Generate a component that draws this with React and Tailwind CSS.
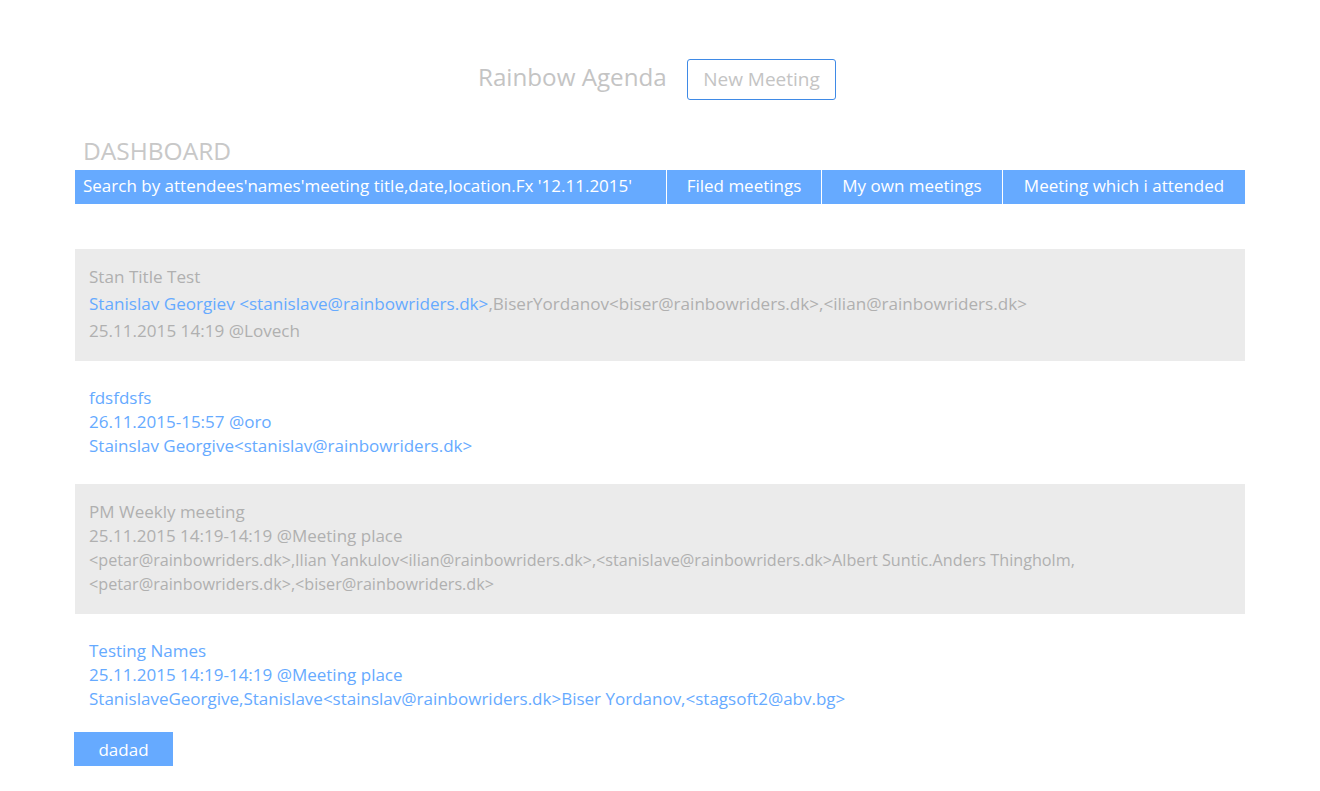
export default function App() {
  const font = { fontFamily: '"Open Sans", "Noto Sans", sans-serif' };
  return (
    <div className="min-h-[791px] bg-white" style={font}>
      <div className="flex items-center justify-center gap-[22px] pr-[6px] pt-[59px]">
        <span className="mb-[5px] w-[187px] whitespace-nowrap text-[24.2px] text-[#c4c4c4]">Rainbow Agenda</span>
        <button className="h-[41px] w-[149px] rounded-[3px] border border-[#3f8ae6] text-[19px] text-[#c4c4c4]">New Meeting</button>
      </div>
      <div className="mx-[75px] mt-[36px]">
        <div className="pl-[8px] text-[24.5px] leading-[30px] text-[#c8c8c8]">DASHBOARD</div>
        <div className="mt-[4px] flex h-[34px] bg-[#66aaff] pb-[3px] text-[17px] text-white">
          <div className="flex w-[591px] items-center pl-[8px]">Search by attendees'names'meeting title,date,location.Fx '12.11.2015'</div>
          <div className="-mb-[3px] flex w-[155px] items-center justify-center border-l border-white pb-[3px]">Filed meetings</div>
          <div className="-mb-[3px] flex w-[181px] items-center justify-center border-l border-white pb-[3px]">My own meetings</div>
          <div className="-mb-[3px] flex flex-1 items-center justify-center border-l border-white pb-[3px]">Meeting which i attended</div>
        </div>
        <div className="mt-[45px] bg-[#ebebeb] px-[14px] pb-[17px] pt-[14px] text-[17.1px] leading-[27px] text-[#b0b0b0]">
          <div>Stan Title Test</div>
          <div><span className="text-[#66aaff]">Stanislav Georgiev &lt;stanislave@rainbowriders.dk&gt;</span>,BiserYordanov&lt;biser@rainbowriders.dk&gt;,&lt;ilian@rainbowriders.dk&gt;</div>
          <div>25.11.2015 14:19 @Lovech</div>
        </div>
        <div className="mt-[15px] px-[14px] pb-[15px] pt-[10px] text-[17px] leading-[24px] text-[#66aaff]">
          <div>fdsfdsfs</div>
          <div>26.11.2015-15:57 @oro</div>
          <div>Stainslav Georgive&lt;stanislav@rainbowriders.dk&gt;</div>
        </div>
        <div className="mt-[11px] bg-[#ebebeb] px-[14px] pb-[18px] pt-[16px] leading-[24px] text-[#b0b0b0]">
          <div className="text-[17px]">PM Weekly meeting</div>
          <div className="text-[17px]">25.11.2015 14:19-14:19 @Meeting place</div>
          <div className="text-[16.2px]">&lt;petar@rainbowriders.dk&gt;,Ilian Yankulov&lt;ilian@rainbowriders.dk&gt;,&lt;stanislave@rainbowriders.dk&gt;Albert Suntic.Anders Thingholm,<br />&lt;petar@rainbowriders.dk&gt;,&lt;biser@rainbowriders.dk&gt;</div>
        </div>
        <div className="mt-[12px] px-[14px] pt-[13px] text-[17px] leading-[24px] text-[#66aaff]">
          <div>Testing Names</div>
          <div>25.11.2015 14:19-14:19 @Meeting place</div>
          <div>StanislaveGeorgive,Stanislave&lt;stainslav@rainbowriders.dk&gt;Biser Yordanov,&lt;stagsoft2@abv.bg&gt;</div>
        </div>
      </div>
      <div className="ml-[74px] mt-[21px] flex h-[34px] w-[99px] items-center justify-center bg-[#66aaff] text-[17px] text-white">dadad</div>
    </div>
  );
}
